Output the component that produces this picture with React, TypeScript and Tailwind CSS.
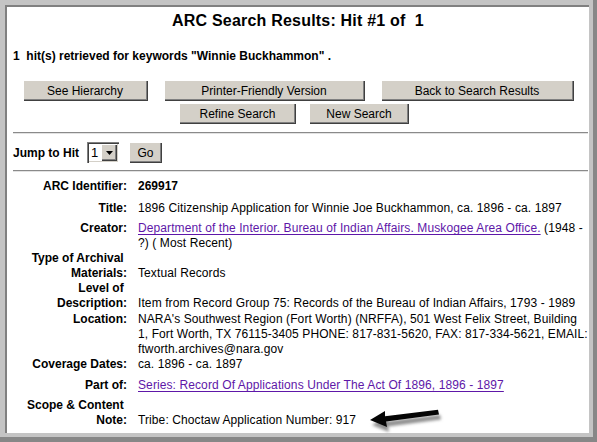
import clsx from "clsx";

const raised =
  "bg-[#d4d0c8] shadow-[inset_1px_1px_0_#ffffff,inset_-1px_-1px_0_#404040,inset_-2px_-2px_0_#808080]";

function PushButton({ label, className }: { label: string; className?: string }) {
  return (
    <div
      className={clsx(
        "flex h-[21px] shrink-0 items-center justify-center text-[12px] text-black",
        raised,
        className,
      )}
    >
      {label}
    </div>
  );
}

function Divider() {
  return <div className="mr-[1px] ml-[6px] h-[2px] border-t border-b border-t-[#8a8a8a] border-b-[#e2e2e2]" />;
}

interface FieldProps {
  label: string[];
  className?: string;
  children: React.ReactNode;
}

function Field({ label, className, children }: FieldProps) {
  return (
    <div className={clsx("grid grid-cols-[114px_1fr] gap-x-[11px]", className)}>
      <div className="self-start text-right font-bold">
        {label.map((line, i) => (
          <div key={i} className="whitespace-nowrap">
            {line}
          </div>
        ))}
      </div>
      <div className="self-end tracking-[0.1px]">{children}</div>
    </div>
  );
}

const linkClass = "text-[#5e17a8] underline underline-offset-[2px]";

export default function App() {
  return (
    <div className="relative h-[442px] w-[597px] border-r-[4px] border-b-[5px] border-[#878787] bg-[#c4c4c4] pt-[5px] pr-[4px] pb-[4px] pl-[5px] font-['Liberation_Sans',Arial,sans-serif] text-[12px] text-black">
      <div className="h-full border-t-2 border-l-2 border-[#808080] bg-white">
        <div className="mt-[4px] h-[20px] text-center text-[16px] leading-[20px] font-bold tracking-[0.2px]">
          ARC Search Results: Hit #1 of&nbsp; 1
        </div>

        <div className="mt-[18px] pl-[6px] leading-[15px] font-bold">
          1&nbsp; hit(s) retrieved for keywords "Winnie Buckhammon"&nbsp;.
        </div>

        <div className="mt-[16px] flex justify-center gap-[16px]">
          <PushButton label="See Hierarchy" className="w-[125px]" />
          <PushButton label="Printer-Friendly Version" className="w-[201px]" />
          <PushButton label="Back to Search Results" className="w-[193px]" />
        </div>
        <div className="mt-[2px] flex justify-center gap-[13px] pr-[8px]">
          <PushButton label="Refine Search" className="w-[117px]" />
          <PushButton label="New Search" className="w-[100px]" />
        </div>

        <div className="mt-[8px]">
          <Divider />
        </div>

        <div className="mt-[8px] flex h-[21px] items-center pl-[6px]">
          <span className="font-bold">Jump to Hit</span>
          <div className="ml-[8px] flex h-[21px] w-[32px] items-center bg-white p-[2px] shadow-[inset_1px_1px_0_#808080,inset_2px_2px_0_#404040,inset_-1px_-1px_0_#ffffff,inset_-2px_-2px_0_#d4d0c8]">
            <span className="flex-1 pl-[2px] text-[13px] leading-none">1</span>
            <div className={clsx("flex h-full w-[16px] items-center justify-center", raised)}>
              <svg width="7" height="4" viewBox="0 0 7 4">
                <path d="M0 0h7L3.5 4z" fill="#000" />
              </svg>
            </div>
          </div>
          <PushButton label="Go" className="ml-[10px] w-[33px]" />
        </div>

        <div className="mt-[7px]">
          <Divider />
        </div>

        <div className="mt-[7px] pl-[6px] leading-[15px]">
          <Field label={["ARC Identifier:"]}>
            <span className="font-bold tracking-normal">269917</span>
          </Field>
          <Field label={["Title:"]} className="mt-[7px]">
            <span className="whitespace-nowrap">
              1896 Citizenship Application for Winnie Joe Buckhammon, ca. 1896 - ca. 1897
            </span>
          </Field>
          <Field label={["Creator:"]} className="mt-[5px]">
            <div className="whitespace-nowrap">
              <span className={linkClass}>
                Department of the Interior. Bureau of Indian Affairs. Muskogee Area Office.
              </span>{" "}
              (1948 -
            </div>
            <div>?) ( Most Recent)</div>
          </Field>
          <Field label={["Type of Archival\u00a0", "Materials:"]}>Textual Records</Field>
          <Field label={["Level of\u00a0", "Description:"]}>
            <span className="whitespace-nowrap">
              Item from Record Group 75: Records of the Bureau of Indian Affairs, 1793 - 1989
            </span>
          </Field>
          <Field label={["Location:"]} className="mt-[1px]">
            <div className="whitespace-nowrap">
              NARA's Southwest Region (Fort Worth) (NRFFA), 501 West Felix Street, Building
            </div>
            <div className="whitespace-nowrap">
              1, Fort Worth, TX 76115-3405 PHONE: 817-831-5620, FAX: 817-334-5621, EMAIL:
            </div>
            <div>ftworth.archives@nara.gov</div>
          </Field>
          <Field label={["Coverage Dates:"]}>ca. 1896 - ca. 1897</Field>
          <Field label={["Part of:"]} className="mt-[6px]">
            <span className={clsx(linkClass, "whitespace-nowrap")}>
              Series: Record Of Applications Under The Act Of 1896, 1896 - 1897
            </span>
          </Field>
          <Field label={["Scope & Content\u00a0", "Note:"]} className="mt-[5px]">
            Tribe: Choctaw Application Number: 917
          </Field>
        </div>
      </div>

      <svg
        className="absolute top-[400px] left-[360px]"
        width="90"
        height="40"
        viewBox="0 0 90 40"
      >
        <defs>
          <filter id="arrow-shadow" x="-20%" y="-50%" width="140%" height="200%">
            <feGaussianBlur stdDeviation="1.6" />
          </filter>
        </defs>
        <path
          d="M10 20 L25 11 L25 16.3 L78 9.8 L79 14.5 L26 21.6 L27 27 Z"
          fill="#8f8f8f"
          filter="url(#arrow-shadow)"
          transform="translate(2 5)"
        />
        <path d="M10 20 L25 11 L25 16.3 L78 9.8 L79 14.5 L26 21.6 L27 27 Z" fill="#050505" />
      </svg>
    </div>
  );
}
